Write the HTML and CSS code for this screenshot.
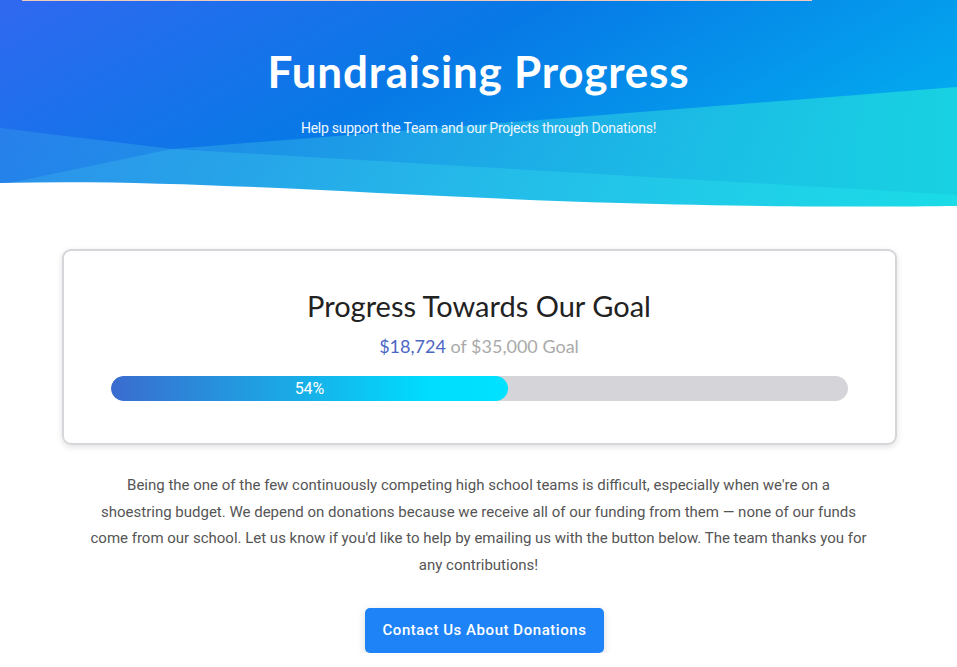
FILE: index.html
```html
<!DOCTYPE html>
<html lang="en">
<head>
<meta charset="utf-8">
<title>Fundraising Progress</title>
<link rel="stylesheet" href="styles.css">
</head>
<body>
<header class="hero">
  <svg class="hero-bg" viewBox="0 0 957 215" preserveAspectRatio="none" aria-hidden="true">
    <defs>
      <linearGradient id="g1" x1="0" y1="0" x2="1" y2="0.4">
        <stop offset="0" stop-color="#3068f0"/>
        <stop offset="0.5" stop-color="#0779e6"/>
        <stop offset="1" stop-color="#03a9ef"/>
      </linearGradient>
      <linearGradient id="g2" x1="0" y1="0" x2="1" y2="0">
        <stop offset="0" stop-color="#3aa0ea" stop-opacity="0.35"/>
        <stop offset="1" stop-color="#1ad6e0" stop-opacity="0.9"/>
      </linearGradient>
      <linearGradient id="g3" x1="0" y1="0" x2="1" y2="0">
        <stop offset="0" stop-color="#40b8ec" stop-opacity="0.3"/>
        <stop offset="1" stop-color="#1ce2ea" stop-opacity="0.6"/>
      </linearGradient>
    </defs>
    <rect x="0" y="0" width="957" height="215" fill="url(#g1)"/>
    <polygon points="0,128 172,149 957,87 957,215 0,215" fill="url(#g2)"/>
    <polygon points="172,149 957,195 957,215 0,215 0,185" fill="url(#g3)"/>
    <path d="M0,183 C 180,178 380,196 620,203 C 760,207 880,207 957,206 L957,215 L0,215 Z" fill="#fff"/>
  </svg>
  <div class="topline"></div>
  <div class="hero-content">
    <h1 class="hero-title">Fundraising Progress</h1>
    <p class="hero-sub">Help support the Team and our Projects through Donations!</p>
  </div>
</header>

<main class="main">
  <section class="card">
    <h2 class="card-title">Progress Towards Our Goal</h2>
    <p class="amount"><span class="raised">$18,724</span> of $35,000 Goal</p>
    <div class="bar">
      <div class="bar-fill" style="width:54%">54%</div>
    </div>
  </section>

  <p class="text">Being the one of the few continuously competing high school teams is difficult, especially when we're on a<br>shoestring budget. We depend on donations because we receive all of our funding from them — none of our funds<br>come from our school. Let us know if you'd like to help by emailing us with the button below. The team thanks you for<br>any contributions!</p>

  <div class="actions">
    <a class="btn" href="#">Contact Us About Donations</a>
  </div>
</main>
</body>
</html>
```

FILE: styles.css
```css
* { box-sizing: border-box; }
html, body { margin: 0; padding: 0; background: #fff; }
body { font-family: Roboto, "Liberation Sans", sans-serif; overflow: hidden; }

.hero {
  position: relative;
  height: 215px;
  color: #fff;
}
.hero-bg {
  position: absolute;
  inset: 0;
  width: 100%;
  height: 100%;
  display: block;
}
.topline {
  position: relative;
  margin-left: 22px;
  width: 790px;
  height: 1px;
  background: #f0cbbd;
}
.hero-content {
  position: relative;
  display: flex;
  flex-direction: column;
  align-items: center;
  padding-top: 44px;
}
.hero-title {
  margin: 0;
  font-family: Lato, "Open Sans", sans-serif;
  font-weight: 700;
  font-size: 44px;
  line-height: 52px;
  letter-spacing: 0.8px;
}
.hero-sub {
  margin: 23px 0 0;
  font-family: Roboto, sans-serif;
  font-size: 14px;
  line-height: 16px;
  letter-spacing: -0.25px;
  color: #eef6ff;
}

.main {
  display: flex;
  flex-direction: column;
  align-items: center;
  padding-top: 34px;
}
.card {
  width: 835px;
  margin-left: 1px;
  border: 2px solid #d6d6da;
  border-radius: 9px;
  box-shadow: 0 2px 6px rgba(0,0,0,0.12);
  padding: 38px 47px 42px;
  display: flex;
  flex-direction: column;
  align-items: center;
}
.card-title {
  margin: 0;
  font-family: Lato, "Open Sans", sans-serif;
  font-weight: 400;
  font-size: 29px;
  line-height: 34px;
  color: #222;
}
.amount {
  margin: 12px 0 0;
  font-family: Lato, "Open Sans", sans-serif;
  font-size: 18px;
  line-height: 22px;
  color: #aaa;
}
.raised { color: #4b67c4; }
.bar {
  margin-top: 19px;
  width: 100%;
  height: 25px;
  border-radius: 13px;
  background: #d4d4d9;
  overflow: hidden;
}
.bar-fill {
  height: 100%;
  border-radius: 13px;
  background: linear-gradient(90deg, #3a6ccf 0%, #1aaae6 45%, #00ddfe 80%, #00e2ff 100%);
  color: #fff;
  font-size: 16px;
  line-height: 25px;
  text-align: center;
}

.text {
  width: 820px;
  margin: 27px 0 0;
  text-align: center;
  font-size: 15px;
  line-height: 26.7px;
  color: #555;
  letter-spacing: 0;
}
.actions {
  margin-top: 29px;
  margin-left: 12px;
  display: flex;
  justify-content: center;
}
.btn {
  display: block;
  background: #1e83f7;
  color: #fff;
  text-decoration: none;
  font-weight: 500;
  font-size: 15px;
  line-height: 45px;
  padding: 0 18px;
  border-radius: 5px;
  letter-spacing: 0.55px;
  box-shadow: 0 3px 8px rgba(0,0,0,0.15);
}
```
